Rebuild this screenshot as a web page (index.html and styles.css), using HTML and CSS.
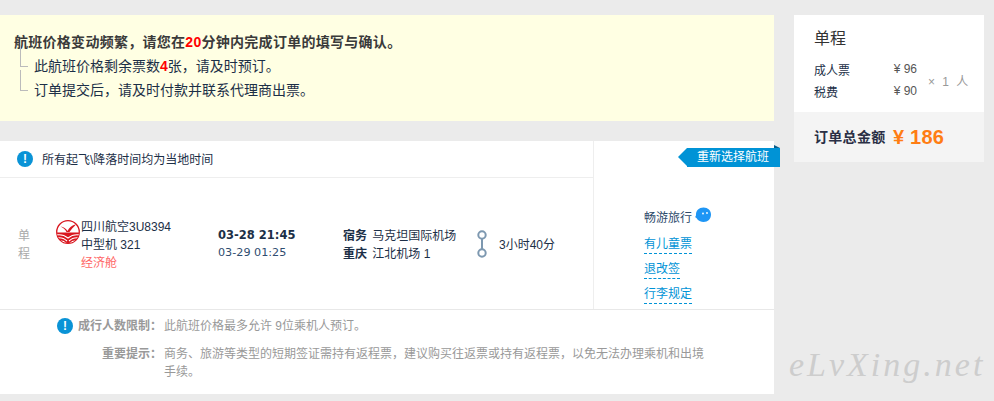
FILE: index.html
```html
<!DOCTYPE html>
<html lang="zh">
<head>
<meta charset="utf-8">
<title>订单</title>
<link rel="stylesheet" href="styles.css">
</head>
<body>
<div class="page">
  <main class="main">
    <section class="warn">
      <p class="warn-title">航班价格变动频繁，请您在<b class="red">20</b>分钟内完成订单的填写与确认。</p>
      <ul class="warn-list">
        <li>此航班价格剩余票数<b class="red">4</b>张，请及时预订。</li>
        <li>订单提交后，请及时付款并联系代理商出票。</li>
      </ul>
    </section>
    <section class="card">
      <div class="top">
        <div class="left">
          <div class="notice">
            <span class="info">!</span>
            <span class="notice-text">所有起飞\降落时间均为当地时间</span>
          </div>
          <div class="flight">
            <div class="trip">单<br>程</div>
            <svg class="logo" viewBox="0 0 24 24" aria-hidden="true">
              <defs><clipPath id="logo-clip"><circle cx="12" cy="12" r="11"/></clipPath></defs>
              <circle cx="12" cy="12" r="11.300" fill="#fff" stroke="#d9161f" stroke-width="1.300"/>
              <path d="M4.500 6.500 C7.500 7 10 8.500 11.500 11 C13 8 16 5 20 4.500 C17.500 7 15 9.500 13.500 12 L10.500 12 C9.500 9.500 7 7.500 4.500 6.500Z" fill="#d9161f"/>
              <g clip-path="url(#logo-clip)">
                <path d="M0 12.500 H24 V24 H0Z" fill="#d9161f"/>
                <path d="M0 15 C5 14 9 15.500 12 18 C15 15.500 19 14 24 15 M0 18 C5 17 8.500 18.500 11 21 M24 18 C19 17 15.500 18.500 13 21 M3 21.500 C6 20.500 8.500 21.500 10 24 M21 21.500 C18 20.500 15.500 21.500 14 24" fill="none" stroke="#fff" stroke-width="1.100"/>
              </g>
            </svg>
            <div class="airline">
              <div>四川航空3U8394</div>
              <div>中型机 321</div>
              <div class="cabin">经济舱</div>
            </div>
            <div class="times">
              <div class="dep">03-28 21:45</div>
              <div class="arr">03-29 01:25</div>
            </div>
            <div class="airports">
              <div><b>宿务</b> 马克坦国际机场</div>
              <div><b>重庆</b> 江北机场 1</div>
            </div>
            <svg class="stop" viewBox="0 0 12 28" aria-hidden="true">
              <circle cx="6" cy="5" r="3.700" fill="none" stroke="#7d98b0" stroke-width="2"/>
              <path d="M6 8.700V19.300" stroke="#7d98b0" stroke-width="2"/>
              <circle cx="6" cy="23" r="3.700" fill="none" stroke="#7d98b0" stroke-width="2"/>
            </svg>
            <div class="duration">3小时40分</div>
          </div>
        </div>
        <aside class="ops">
          <a class="rechoose" href="#">重新选择航班</a>
          <div class="agent">畅游旅行
            <svg class="bubble" viewBox="0 0 16 16" aria-hidden="true">
              <path d="M8.500 0.500 C13 0.500 16 3.500 16 7.500 C16 12 13 15 8.500 15 C6 15 4 14 2.500 12.500 C2 11.500 1 10.500 0 10 C0.800 9.500 1 8.500 1 7.500 C1 3.500 4 0.500 8.500 0.500Z" fill="#1e96f5"/>
              <circle cx="8" cy="6.500" r="0.900" fill="#fff"/><circle cx="12" cy="6" r="0.900" fill="#fff"/>
            </svg>
          </div>
          <a class="link" href="#">有儿童票</a>
          <a class="link" href="#">退改签</a>
          <a class="link" href="#">行李规定</a>
        </aside>
      </div>
      <div class="notes">
        <div class="note">
          <div class="note-label"><span class="info">!</span><b>成行人数限制：</b></div>
          <div class="note-text">此航班价格最多允许 9位乘机人预订。</div>
        </div>
        <div class="note note-gap">
          <div class="note-label"><b>重要提示：</b></div>
          <div class="note-text">商务、旅游等类型的短期签证需持有返程票，建议购买往返票或持有返程票，以免无法办理乘机和出境手续。</div>
        </div>
      </div>
    </section>
  </main>
  <aside class="side">
    <div class="side-top">
      <h2 class="side-title">单程</h2>
      <div class="price-wrap">
        <div class="prices">
          <div class="price-row"><span>成人票</span><span class="amt">¥ 96</span></div>
          <div class="price-row"><span>税费</span><span class="amt">¥ 90</span></div>
        </div>
        <div class="count">× 1 人</div>
      </div>
    </div>
    <div class="total"><b class="total-label">订单总金额</b><b class="total-amt">¥ 186</b></div>
  </aside>
</div>
<div class="mark">eLvXing.net</div>
</body>
</html>
```
FILE: styles.css
```css
* { box-sizing: border-box; }
html, body { margin: 0; padding: 0; }
body {
  width: 994px;
  height: 401px;
  overflow: hidden;
  position: relative;
  background: #ebebeb;
  color: #1c2f47;
  font: 12px/18px "Liberation Sans", "Noto Sans CJK SC", sans-serif;
}
.page { display: flex; gap: 20px; padding-top: 15px; align-items: flex-start; }
.main { width: 774px; flex: none; }
.red { color: #f00; font-weight: bold; }

.warn { height: 106px; background: #ffffe3; padding: 15px 14px 0; font-size: 14px; line-height: 24px; }
.warn-title { margin: 0; font-weight: bold; color: #3a3a3a; letter-spacing: 0.280px; }
.warn-list { list-style: none; margin: 0; padding: 0 0 0 20px; }
.warn-list li { position: relative; }
.warn-list li::before {
  content: "";
  position: absolute;
  left: -14px;
  top: -8px;
  width: 7px;
  height: 20px;
  border-left: 1px solid #bbb;
  border-bottom: 1px solid #bbb;
}

.card { margin-top: 20px; height: 253px; background: #fff; }
.top { display: flex; height: 169px; border-bottom: 1px solid #e8e8e8; }
.left { width: 593px; flex: none; }
.notice { height: 37px; display: flex; align-items: center; gap: 9px; padding-left: 17px; border-bottom: 1px solid #eee; }
.notice-text { padding-top: 2px; }
.info {
  width: 16px;
  height: 16px;
  border-radius: 50%;
  background: #0a93d6;
  color: #fff;
  font: bold 12px/16px "Liberation Sans", sans-serif;
  text-align: center;
  flex: none;
}
.flight { display: flex; align-items: center; height: 131px; padding-top: 3px; }
.trip { width: 56px; padding-left: 18px; color: #aaa; }
.logo { width: 24px; height: 24px; flex: none; margin: -26px 1px 0 0; }
.airline { width: 137px; }
.cabin { color: #f66; }
.times { width: 125px; margin-top: -2px; font-family: "DejaVu Sans", "Noto Sans CJK SC", sans-serif; }
.dep { font-weight: bold; font-size: 11.500px; }
.arr { color: #2f4d70; font-size: 11.200px; }
.airports { width: 133px; }
.airports b { color: #1c2f47; margin-right: 2px; }
.stop { width: 12px; height: 28px; flex: none; margin: -3px 11px 0 0; }

.ops { position: relative; flex: 1; border-left: 1px solid #eee; padding: 68px 0 0 50px; display: flex; flex-direction: column; align-items: flex-start; }
.rechoose {
  position: absolute;
  top: 7px;
  right: -6px;
  height: 19px;
  padding: 0 11px 0 10px;
  background: #0093d6;
  color: #fff;
  font-size: 12px;
  line-height: 19px;
  text-decoration: none;
}
.rechoose::before {
  content: "";
  position: absolute;
  left: -9px;
  top: 0;
  border: 9.500px solid transparent;
  border-left: 0;
  border-right: 9px solid #0093d6;
}
.rechoose::after {
  content: "";
  position: absolute;
  right: 0;
  top: -3px;
  border-bottom: 3px solid #0b5f8c;
  border-right: 6px solid transparent;
}
.agent { color: #2c4a6b; height: 18px; margin-bottom: 9px; position: relative; }
.bubble { position: absolute; left: 51px; top: -2px; width: 16px; height: 16px; }
.link { color: #0093d6; text-decoration: none; border-bottom: 1px dashed #0093d6; height: 18px; line-height: 17px; margin-bottom: 7px; }

.notes { padding-top: 7px; color: #999; }
.note { display: flex; }
.note-gap { margin-top: 10px; }
.note-label { width: 164px; flex: none; display: flex; justify-content: flex-end; align-items: center; align-self: flex-start; padding-right: 2px; gap: 5px; height: 18px; }
.note-text { width: 546px; }

.side { width: 190px; flex: none; }
.side-top { height: 97px; background: #fff; padding: 15px 15px 0 20px; }
.side-title { margin: 0; font-size: 16px; line-height: 18px; font-weight: normal; color: #333; }
.price-wrap { display: flex; align-items: center; margin-top: 11px; }
.prices { width: 103px; }
.price-row { display: flex; justify-content: space-between; height: 22px; align-items: center; }
.price-row span:first-child { padding-top: 2px; }
.amt { color: #555; padding-bottom: 2px; }
.count { margin-left: 11px; padding-top: 2px; color: #999; word-spacing: 4px; }
.total { height: 50px; background: #f4f4f4; display: flex; align-items: center; padding-left: 20px; }
.total-label { width: 79px; font-size: 14px; color: #2a2f45; letter-spacing: 0.300px; white-space: nowrap; }
.total-amt { color: #ff7d13; font-size: 20px; letter-spacing: 0.200px; }

.mark {
  position: absolute;
  left: 789px;
  top: 345px;
  color: #cdcdcd;
  font: italic 34px/40px "Liberation Serif", serif;
  letter-spacing: 3px;
  white-space: nowrap;
}
```
